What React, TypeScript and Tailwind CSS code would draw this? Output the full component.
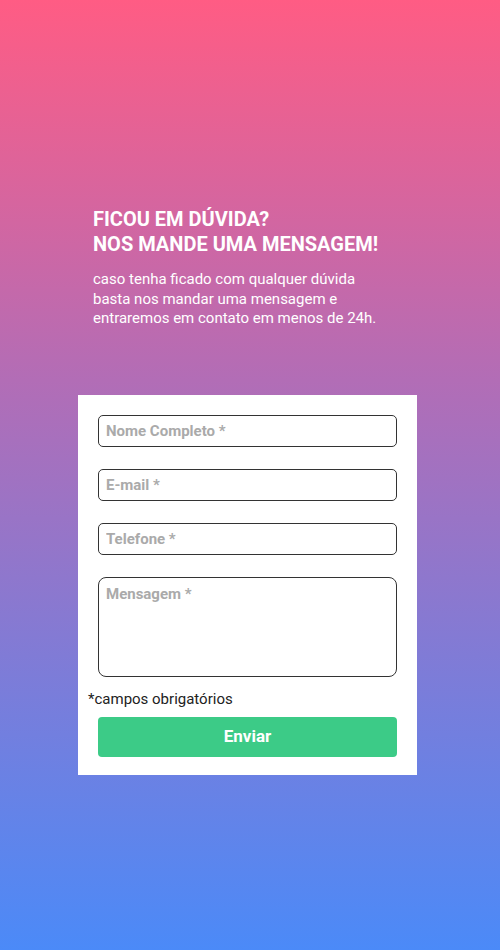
export default function App() {
  return (
    <div
      className="w-[500px] h-[950px] bg-[linear-gradient(180deg,#ff5c84_0%,#b26db6_40%,#4b8af8_100%)] flex flex-col"
      style={{ fontFamily: "Roboto, 'Noto Sans', sans-serif" }}
    >
      <div className="w-[300px] ml-[93px] mt-[207px] text-white">
        <h1 className="text-[20px] leading-[25px] font-bold uppercase whitespace-nowrap">
          Ficou em dúvida?
          <br />
          Nos mande uma mensagem!
        </h1>
        <p className="mt-[13px] text-[15px] leading-[19.5px] w-[292px]">
          caso tenha ficado com qualquer dúvida basta nos mandar uma mensagem e entraremos em contato em menos de 24h.
        </p>
      </div>
      <form className="mt-[66px] ml-[78px] w-[339px] bg-white pt-[20px] pb-[18px] flex flex-col">
        <div className="px-[20px] flex flex-col gap-[22px]">
          <input
            placeholder="Nome Completo *"
            className="h-[32px] w-full border border-[#333] rounded-[5px] px-[7px] text-[15px] font-bold placeholder:text-[#aaa] outline-none"
          />
          <input
            placeholder="E-mail *"
            className="h-[32px] w-full border border-[#333] rounded-[5px] px-[7px] text-[15px] font-bold placeholder:text-[#aaa] outline-none"
          />
          <input
            placeholder="Telefone *"
            className="h-[32px] w-full border border-[#333] rounded-[5px] px-[7px] text-[15px] font-bold placeholder:text-[#aaa] outline-none"
          />
          <textarea
            placeholder="Mensagem *"
            className="h-[100px] w-full border border-[#333] rounded-[8px] px-[7px] py-[5px] text-[15px] font-bold placeholder:text-[#aaa] outline-none resize-none"
          />
        </div>
        <p className="px-[10px] mt-[12px] text-[15px] leading-[20px] text-[#222]">*campos obrigatórios</p>
        <div className="px-[20px] mt-[8px]">
          <button
            type="button"
            className="w-full h-[40px] rounded-[4px] bg-[#3ccb87] text-white font-bold text-[17px]"
          >
            Enviar
          </button>
        </div>
      </form>
    </div>
  );
}
